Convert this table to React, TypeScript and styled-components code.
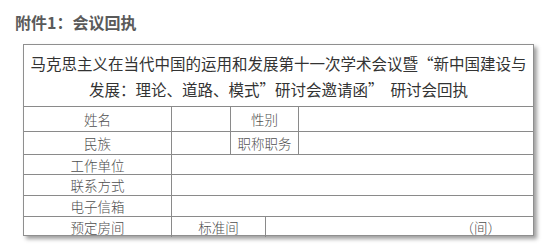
import React from "react";
import styled, { createGlobalStyle } from "styled-components";

const Global = createGlobalStyle`
  html, body { margin: 0; padding: 0; background: #ffffff; }
  body { font-family: "Noto Sans CJK SC", "Noto Sans", sans-serif; }
`;

const Page = styled.div`
  width: 555px;
  height: 250px;
  padding: 12px 0 0 15px;
  box-sizing: border-box;
  overflow: hidden;
`;

const Heading = styled.h1`
  margin: 0;
  font-size: 16px;
  line-height: 20px;
  font-weight: 700;
  color: #5a5a5a;
  font-family: "Noto Sans CJK SC", "Noto Sans", sans-serif;
`;

const Sheet = styled.div`
  margin: 12px 0 0 8px;
  width: 511px;
  box-sizing: border-box;
  border: 1px solid #8f8f8f;
  background: #fff;
  box-shadow: 3px 3px 4px rgba(0, 0, 0, 0.38);
`;

const Title = styled.div`
  padding: 5px 0 4px;
  text-align: center;
  font-size: 15.5px;
  line-height: 26px;
  color: #333;
  font-family: "Noto Sans CJK SC", sans-serif;
`;

const TitleLine = styled.div`
  white-space: pre;
`;

const Row = styled.div<{ $cols: string; $h: number }>`
  display: grid;
  grid-template-columns: ${(p) => p.$cols};
  height: ${(p) => p.$h}px;
  box-sizing: border-box;
  border-top: 1px solid #8a8a8a;
`;

const Cell = styled.div<{ $align?: "center" | "right"; $pad?: number }>`
  display: flex;
  align-items: center;
  justify-content: ${(p) => (p.$align === "right" ? "flex-end" : "center")};
  padding-right: ${(p) => p.$pad ?? 0}px;
  box-sizing: border-box;
  font-size: 13.5px;
  font-weight: 300;
  color: #4e4e4e;
  font-family: "Noto Sans CJK SC", sans-serif;
  & + & {
    border-left: 1px solid #8a8a8a;
  }
`;

const PAIR = "147px 59px 68px 1fr";
const WIDE = "147px 1fr";
const ROOM = "147px 94px 1fr";

export default function App() {
  return (
    <>
      <Global />
      <Page>
        <Heading>附件1：会议回执</Heading>
        <Sheet>
          <Title>
            <TitleLine>马克思主义在当代中国的运用和发展第十一次学术会议暨“新中国建设与</TitleLine>
            <TitleLine>发展：理论、道路、模式”研讨会邀请函”  研讨会回执</TitleLine>
          </Title>
          <Row $cols={PAIR} $h={25}>
            <Cell>姓名</Cell>
            <Cell />
            <Cell>性别</Cell>
            <Cell />
          </Row>
          <Row $cols={PAIR} $h={23}>
            <Cell>民族</Cell>
            <Cell />
            <Cell>职称职务</Cell>
            <Cell />
          </Row>
          <Row $cols={WIDE} $h={20}>
            <Cell>工作单位</Cell>
            <Cell />
          </Row>
          <Row $cols={WIDE} $h={21}>
            <Cell>联系方式</Cell>
            <Cell />
          </Row>
          <Row $cols={WIDE} $h={21}>
            <Cell>电子信箱</Cell>
            <Cell />
          </Row>
          <Row $cols={ROOM} $h={19}>
            <Cell>预定房间</Cell>
            <Cell>标准间</Cell>
            <Cell $align="right" $pad={32}>（间）</Cell>
          </Row>
        </Sheet>
      </Page>
    </>
  );
}
